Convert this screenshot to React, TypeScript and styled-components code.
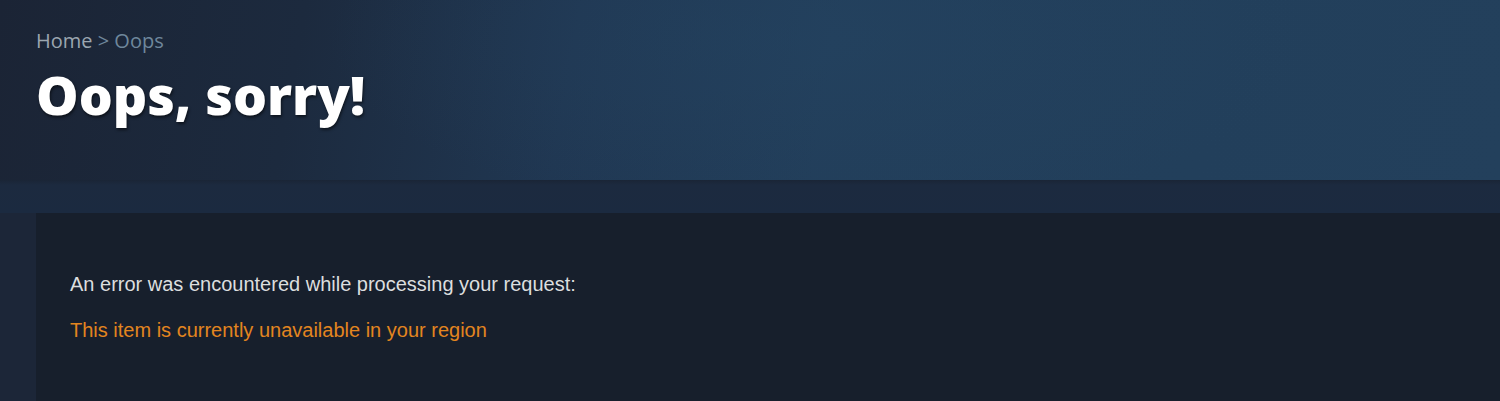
import styled, { createGlobalStyle } from 'styled-components';

const GlobalStyle = createGlobalStyle`
  html, body {
    margin: 0;
    padding: 0;
    background: #1b2838;
  }
  body {
    font-family: "Open Sans", "Liberation Sans", Arial, sans-serif;
    overflow: hidden;
  }
`;

const Page = styled.div`
  width: 1500px;
  height: 401px;
  background: #1c2638;
  overflow: hidden;
`;

const Hero = styled.header`
  height: 180px;
  box-sizing: border-box;
  padding: 27px 36px 0;
  background:
    radial-gradient(ellipse 700px 260px at 820px 40px, rgba(36, 68, 98, 0.5), rgba(36, 68, 98, 0) 70%),
    linear-gradient(100deg, #1b2435 0%, #1c2a3e 20%, #203752 38%, #223e5a 55%, #223f5b 80%, #23405c 100%);
`;

const Breadcrumbs = styled.nav`
  font-size: 20px;
  line-height: 28px;
  color: #6f879c;
`;

const Crumb = styled.a`
  color: #9ba6b0;
  text-decoration: none;
`;

const Title = styled.h1`
  margin: 6px 0 0;
  font-size: 53.5px;
  font-weight: 800;
  line-height: 68px;
  color: #ffffff;
  text-shadow: 1px 2px 3px rgba(0, 0, 0, 0.55);
`;

const Band = styled.div`
  height: 33px;
  background: linear-gradient(180deg, #1a2536 0%, #1c2a3f 15%, #1b2a40 100%);
`;

const Content = styled.main`
  padding-left: 36px;
  background: #1c2638;
`;

const Panel = styled.section`
  height: 188px;
  box-sizing: border-box;
  padding: 59px 34px 0;
  background: #171f2c;
  font-family: "Liberation Sans", Arial, sans-serif;
  font-size: 20px;
  line-height: 24px;
`;

const Message = styled.p<{ tone?: 'error' }>`
  margin: 0 0 22px;
  color: ${({ tone }) => (tone === 'error' ? '#e3851f' : '#dcdedf')};
`;

export default function App() {
  return (
    <Page>
      <GlobalStyle />
      <Hero>
        <Breadcrumbs>
          <Crumb href="#">Home</Crumb> &gt; Oops
        </Breadcrumbs>
        <Title>Oops, sorry!</Title>
      </Hero>
      <Band />
      <Content>
        <Panel>
          <Message>An error was encountered while processing your request:</Message>
          <Message tone="error">This item is currently unavailable in your region</Message>
        </Panel>
      </Content>
    </Page>
  );
}
